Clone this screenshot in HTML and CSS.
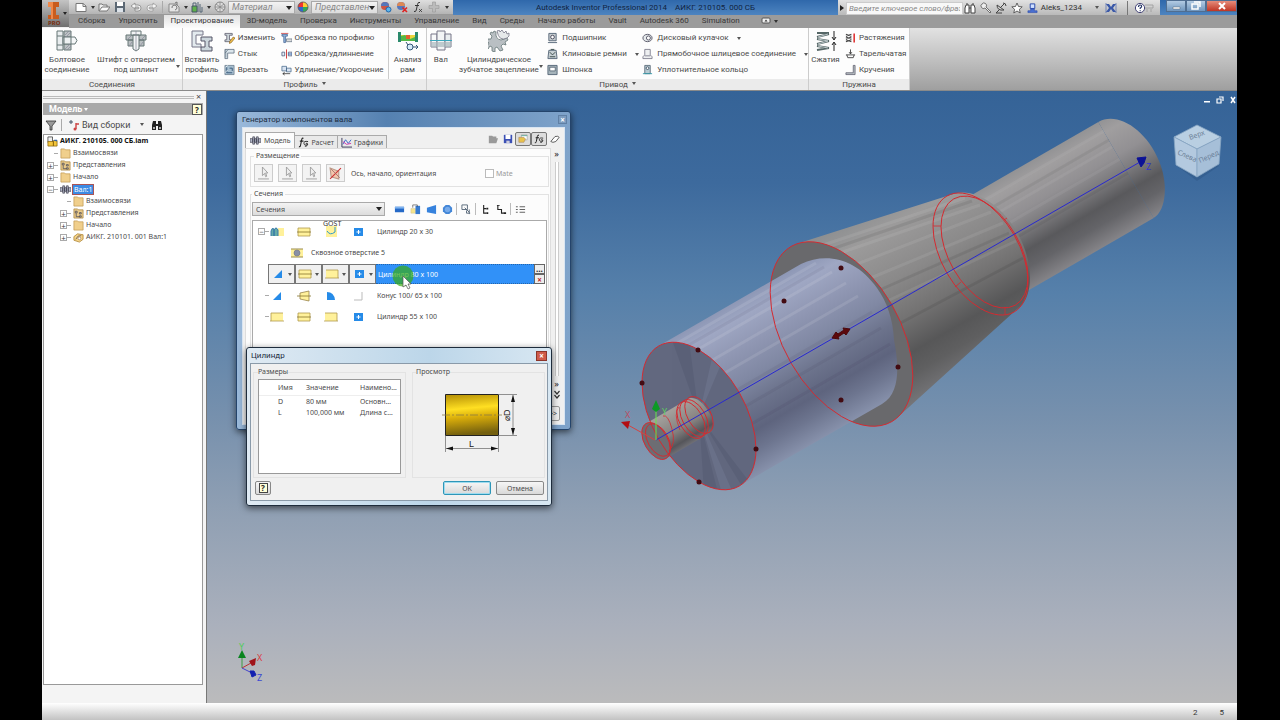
FILE: index.html
```html
<!DOCTYPE html>
<html lang="ru">
<head>
<meta charset="utf-8">
<title>Autodesk Inventor Professional 2014</title>
<link rel="stylesheet" href="styles.css">
</head>
<body>
<svg class="sprite" aria-hidden="true">
  <symbol id="new" viewBox="0 0 12 12"><path d="M1 2.500h7l3 2.500v5.500h-10z" fill="#fff" stroke="#777"/><path d="M8 2.500v3h3" fill="none" stroke="#777"/></symbol>
  <symbol id="open" viewBox="0 0 12 12"><path d="M1 10V3h3l1 1h4v2" fill="#eee" stroke="#777"/><path d="M1 10l3-4h8l-3 4z" fill="#fafafa" stroke="#777"/></symbol>
  <symbol id="save" viewBox="0 0 12 12"><path d="M1 1h10v10H1z" fill="#5c6874"/><path d="M3 1h6v4H3z" fill="#fff"/><path d="M3 7h6v4H3z" fill="#dce3ea"/></symbol>
  <symbol id="undo" viewBox="0 0 12 12"><path d="M1 5l4-3v2h3q3 0 3 3t-3 3H5V8h3q1 0 1-1T8 6H5v2z" fill="#f4f4f4" stroke="#888" stroke-width=".8"/></symbol>
  <symbol id="redo" viewBox="0 0 12 12"><path d="M11 5L7 2v2H4Q1 4 1 7t3 3h3V8H4Q3 8 3 7t1-1h3v2z" fill="#f4f4f4" stroke="#999" stroke-width=".8"/></symbol>
  <symbol id="sheet" viewBox="0 0 12 12"><path d="M1 3h7l3 3v5H1z" fill="#e5e5e5" stroke="#888"/><path d="M4 7a2.500 2.500 0 1 1 3 2M7 2l2-1v3" fill="none" stroke="#777"/></symbol>
  <symbol id="lock" viewBox="0 0 12 12"><path d="M1 5h5v6H1z" fill="#5eb04b" stroke="#456"/><path d="M2 5V2h3v3M7 1v10M9 3v8h2V6" fill="none" stroke="#567"/></symbol>
  <symbol id="sphere" viewBox="0 0 12 12"><circle cx="6" cy="6" r="5" fill="#ddd" stroke="#888"/><path d="M2 3l8 6M2 9l8-6M6 1v10M1 6h10" stroke="#888" stroke-width=".8"/></symbol>
  <symbol id="wheel" viewBox="0 0 12 12"><path d="M6 6L1 6A5 5 0 0 1 6 1z" fill="#e33"/><path d="M6 6V1a5 5 0 0 1 5 5z" fill="#fc3"/><path d="M6 6h5a5 5 0 0 1-5 5z" fill="#3a5"/><path d="M6 6v5A5 5 0 0 1 1 6z" fill="#36c"/><circle cx="6" cy="6" r="5" fill="none" stroke="#555" stroke-width=".8"/></symbol>
  <symbol id="ballb" viewBox="0 0 12 12"><circle cx="5" cy="5" r="4" fill="#c54"/><path d="M1 5a4 4 0 0 1 8 0z" fill="#57b"/><circle cx="8.500" cy="8.500" r="2.500" fill="#5ab6ee" stroke="#26a"/></symbol>
  <symbol id="ballr" viewBox="0 0 12 12"><circle cx="5" cy="5" r="4" fill="#57b"/><path d="M1 5a4 4 0 0 1 8 0z" fill="#d85"/><path d="M6.500 6.500l4.500 4.500M11 6.500L6.500 11" stroke="#d22" stroke-width="1.600"/></symbol>
  <symbol id="fx" viewBox="0 0 12 12"><path d="M8 1.500Q6 .5 5.500 3.500L4.300 9Q4 11 2 10.500M3 4.500h4" fill="none" stroke="#333"/><path d="M7 8l3 3M10 8l-3 3" stroke="#333" stroke-width=".8"/></symbol>
  <symbol id="plus" viewBox="0 0 12 12"><path d="M4.500 1h3v3.500H11v3H7.500V11h-3V7.500H1v-3h3.500z" fill="#bbb" stroke="#999" stroke-width=".6"/></symbol>
  <symbol id="bino" viewBox="0 0 12 12"><path d="M2 3h3v8H1V6zM7 3h3l1 3v5H7z" fill="#fff" stroke="#444"/><path d="M3 1v2M9 1v2M5 6h2" stroke="#444"/></symbol>
  <symbol id="binod" viewBox="0 0 12 12"><path d="M2 2h3v9H1V6zM7 2h3l1 4v5H7z" fill="#222"/><path d="M5 5h2v2H5z" fill="#222"/><path d="M2 8h2v2H2zM8 8h2v2H8z" fill="#aaa"/></symbol>
  <symbol id="wrench" viewBox="0 0 12 12"><path d="M2 2a2.500 2.500 0 0 1 4 3l5 5-1 1-5-5a2.500 2.500 0 0 1-3-4z" fill="#eee" stroke="#555" stroke-width=".8"/></symbol>
  <symbol id="dish" viewBox="0 0 12 12"><path d="M2 3q0 6 7 5zM4 8l-3 3h6M6 5l3-3M8 1q3 0 3 3" fill="none" stroke="#444"/></symbol>
  <symbol id="star" viewBox="0 0 12 12"><path d="M6 1l1.500 3.500 3.700.3-2.800 2.500.8 3.700L6 9l-3.200 2 .8-3.700L.8 4.800l3.700-.3z" fill="#fff" stroke="#444" stroke-width=".8"/></symbol>
  <symbol id="user" viewBox="0 0 12 12"><path d="M3.500 1.500h5v5h-5z" fill="#cfe0ff" stroke="#24a"/><path d="M1 11V9h3V7h4v2h3v2z" fill="#4a6fd0" stroke="#24a" stroke-width=".6"/></symbol>
  <symbol id="exch" viewBox="0 0 12 12"><path d="M1 2h3l2 3 2-3h3L8 6l3 4H8L6 7l-2 3H1l3-4z" fill="#3a58a8"/><path d="M1 1v10M11 1v10" stroke="#3a58a8" stroke-width=".6"/></symbol>
  <symbol id="help" viewBox="0 0 20 12"><circle cx="6" cy="6" r="4.600" fill="#fff" stroke="#447"/><path d="M4.500 5q0-2 1.600-2t1.500 1.500Q7.500 5.500 6.200 6v1M6.200 8.300v1" fill="none" stroke="#236" stroke-width="1.200"/><path d="M11 3h8v3h-8M13 7v3M17 7v3" fill="none" stroke="#999" stroke-width=".8"/></symbol>
  <symbol id="bolt" viewBox="0 0 22 22"><path d="M1 1h6v19H1zM1 6h6M1 15h6" fill="#e9edef" stroke="#677"/><path d="M7 7h12l2 3.500-2 3.500H7z" fill="#f5f7f8" stroke="#677"/><path d="M8 1h7v6H8zM8 14h7v6H8z" fill="#bcc2c4" stroke="#677"/><path d="M8 7h7v7H8z" fill="#edf1f2" stroke="#677"/><path d="M9 5l4-4M10 7l5-5M9 19l5-5M11 20l4-4" stroke="#889" stroke-width=".7"/></symbol>
  <symbol id="pin" viewBox="0 0 22 22"><path d="M1 5h20v5H1zM3 10h16v6H3z" fill="#b9bfc1" stroke="#677"/><path d="M6 1h10v4H6zM8 5h6v14l-3 2-3-2z" fill="#f2f4f5" stroke="#677"/><path d="M11 1v20M2 10l4-4M16 10l4-4M4 16l3-4M15 16l3-4" stroke="#889" stroke-width=".7"/></symbol>
  <symbol id="insprof" viewBox="0 0 22 22"><path d="M1 1h11v4H5v9h5v3H1z" fill="#e3eaee" stroke="#778"/><path d="M10 7h11v4h-3v6h3v4H10v-4h4v-6h-4z" fill="#ccd6dc" stroke="#556"/></symbol>
  <symbol id="frame" viewBox="0 0 22 22"><path d="M1 2h3v10H1zM18 2h3v10h-3z" fill="#2b8a6c"/><path d="M4 5h14v5H4z" fill="#edd43b"/><path d="M4 6l4-1 5 4 5-2v4H4z" fill="#53b848"/><path d="M9 5h4v4H9z" fill="#e2602f"/><circle cx="13" cy="17" r="3" fill="#d7ecfa" stroke="#357"/><path d="M9 12l2 3M16 17h5M19 15l2 2-2 2" fill="none" stroke="#357"/></symbol>
  <symbol id="shaft" viewBox="0 0 22 22"><path d="M1 4h6v13H1z" fill="#f8f9fa" stroke="#778"/><path d="M7 1h8v19H7z" fill="#f2f4f5" stroke="#778"/><path d="M15 4h6v13h-6z" fill="#e9edef" stroke="#778"/><path d="M1 12h20v5H1z" fill="#aab9be" opacity=".7"/><path d="M0 10.500h22" stroke="#3ba8bd"/></symbol>
  <symbol id="gear" viewBox="0 0 22 22"><path d="M6 1l2 1q-1 7 5 8l6-2 1 2-3 2 1 3-3-1-2 2 2 4-3 1-3-4-2 1v4l-3-1v-4l-2-1-2 3-1-3 2-3-2-2 1-2h3l1-3-2-2 1-2 2 1z" fill="#b9bfc3" stroke="#677" stroke-width=".8"/><path d="M9 1l2-1 1 2 2-2 2 3 2-2 1 3 2-1v3l-2 2q-8 4-10-7" fill="#e6e9ea" stroke="#778" stroke-width=".8"/></symbol>
  <symbol id="spring" viewBox="0 0 22 22"><path d="M2 3h12M2 7l12-3M2 9l12 2M2 14l12-3M2 16l12 2M2 20l12-2" stroke="#566" stroke-width="2.200"/><path d="M3 7l10-3M3 9l10 2M3 14l10-3M3 16l10 2" stroke="#c5d0d2" stroke-width=".9"/><path d="M19 1v8M17 7l2 3 2-3M19 21v-8M17 15l2-3 2 3" fill="none" stroke="#222"/></symbol>
  <symbol id="edit" viewBox="0 0 12 12"><path d="M1 1h8v2H6v5h2v2H1V8h2V3H1z" fill="#cbd3d8" stroke="#556" stroke-width=".8"/><path d="M6 10l4-5 2 1-4 5-2 1z" fill="#eebd4b" stroke="#85601a" stroke-width=".7"/></symbol>
  <symbol id="joint" viewBox="0 0 12 12"><path d="M1 1h10v4H4v6H1z" fill="#dce6ec" stroke="#567" stroke-width=".8"/><path d="M1 5l4-4M2 1v9" stroke="#567" stroke-width=".6"/></symbol>
  <symbol id="cut" viewBox="0 0 12 12"><path d="M1 1h10v10H1z" fill="#a7bfd0" stroke="#678" stroke-width=".8"/><path d="M3 3v6h6M6 4h3v3" fill="none" stroke="#357"/><path d="M2 3l2-2M1 9l3-3" stroke="#fff" stroke-width=".8"/></symbol>
  <symbol id="trim" viewBox="0 0 12 12"><path d="M1 2h6v2H5v7H3V4H1z" fill="#91b4dc" stroke="#358" stroke-width=".7"/><path d="M6 7h6v3H6z" fill="#ddd" stroke="#567" stroke-width=".7"/><path d="M0 1h8" stroke="#c33" stroke-width=".8"/></symbol>
  <symbol id="ext" viewBox="0 0 12 12"><path d="M1 4h3v4H1zM8 4h4v4H8z" fill="#e5edf7" stroke="#457" stroke-width=".8"/><path d="M6 1v10" stroke="#c33"/><path d="M8 6h4" stroke="#36a"/></symbol>
  <symbol id="len" viewBox="0 0 12 12"><path d="M1 2h5v5H1zM6 4h5v4H6z" fill="#d8e3f1" stroke="#468" stroke-width=".8"/><path d="M2 10h8M4 8.500L2 10l2 1.500" fill="none" stroke="#222" stroke-width=".8"/></symbol>
  <symbol id="bearing" viewBox="0 0 12 12"><path d="M2 1h8v8H2zM1 11h10" fill="#c7cdd0" stroke="#567"/><circle cx="6" cy="5" r="2" fill="#fff" stroke="#445"/></symbol>
  <symbol id="belt" viewBox="0 0 12 12"><path d="M2 2h8l1 9H1z" fill="#c7d0d4" stroke="#567"/><path d="M3 4l3 3 3-3M3 9h6M4 1h4" fill="none" stroke="#344"/></symbol>
  <symbol id="key" viewBox="0 0 12 12"><path d="M1 1h10v10H1z" fill="#a6b4bb" stroke="#567"/><path d="M3 3h6v4H3z" fill="#fff" stroke="#456" stroke-width=".8"/></symbol>
  <symbol id="cam" viewBox="0 0 12 12"><ellipse cx="6" cy="6" rx="5" ry="4" fill="#e5e9eb" stroke="#556"/><circle cx="7" cy="6" r="2.200" fill="#fff" stroke="#556"/></symbol>
  <symbol id="spline" viewBox="0 0 12 12"><path d="M3 1h6v6l2 2v2H1V9l2-2z" fill="#eef0f1" stroke="#667" stroke-width=".8"/><path d="M3 8h6" stroke="#667" stroke-width=".8"/></symbol>
  <symbol id="ring" viewBox="0 0 12 12"><path d="M3 1h6v9H3z" fill="#b7cbd3" stroke="#456" stroke-width=".8"/><circle cx="6" cy="4" r="1.500" fill="#fff" stroke="#456"/><path d="M1 10h10" stroke="#39a"/></symbol>
  <symbol id="sp1" viewBox="0 0 12 12"><path d="M1 2l6 2M1 5l6 2M1 8l6 2M1 4l6-2M1 7l6-2M1 10l6-2" stroke="#444" stroke-width="1.200"/><path d="M10 1v10" stroke="#d22" stroke-width="1.600"/></symbol>
  <symbol id="sp2" viewBox="0 0 12 12"><path d="M1 7h10M2 7l1 3h6l1-3M6 1v5M4.500 4L6 6l1.500-2" fill="none" stroke="#444"/></symbol>
  <symbol id="sp3" viewBox="0 0 12 12"><path d="M1 9h8V1h2v10H1z" fill="#bcc4c8" stroke="#556" stroke-width=".8"/></symbol>
  <symbol id="folder" viewBox="0 0 12 12"><path d="M1 1h4l1 1h5v9H1z" fill="#f0cf8c" stroke="#c29a52" stroke-width=".8"/></symbol>
  <symbol id="repr" viewBox="0 0 12 12"><path d="M1 1h4l1 1h5v9H1z" fill="#eacb8b" stroke="#a8843f" stroke-width=".8"/><path d="M2.500 3.500h2v2h-2zM3.500 6v3.500H7M7 5h2v1.500H7zM7 8.500h2v1.500H7z" fill="none" stroke="#445" stroke-width=".8"/></symbol>
  <symbol id="asm" viewBox="0 0 12 12"><path d="M1 1h5v6H1z" fill="#eee" stroke="#333" stroke-width=".8"/><path d="M1 6h6v5H1zM7 5h4v6H7z" fill="#f3c63c" stroke="#8a6408" stroke-width=".8"/><path d="M7 5l1-1h3v2" fill="#36a"/></symbol>
  <symbol id="part" viewBox="0 0 12 12"><path d="M1 5l4-3 6 1v5l-4 3-6-2z" fill="#f5d489" stroke="#a77c28" stroke-width=".8"/><path d="M3 8q2-5 6-4" fill="none" stroke="#765"/><circle cx="7" cy="7" r="1.500" fill="#fff" stroke="#865" stroke-width=".6"/></symbol>
  <symbol id="shafti" viewBox="0 0 12 12"><path d="M0 4h3v4H0zM3 2h2v8H3zM5 4h2v4H5zM7 2h2v8H7zM9 4h3v4H9z" fill="#b6bbcc" stroke="#334" stroke-width=".7"/></symbol>
  <symbol id="funnel" viewBox="0 0 12 12"><path d="M1 2h10L7 7v4H5V7z" fill="#999" stroke="#333" stroke-width=".8"/></symbol>
  <symbol id="viewi" viewBox="0 0 12 12"><path d="M1 3h4M3 1v4" stroke="#456"/><path d="M8 4v6M8 5h3" stroke="#c44" stroke-width="1.400"/><circle cx="7" cy="10" r="1.500" fill="#c44"/></symbol>
  <symbol id="graph" viewBox="0 0 12 12"><path d="M1 1v10h11" fill="none" stroke="#335"/><path d="M2 8l3-5 3 4 3-4" fill="none" stroke="#36c"/><path d="M2 5l4 3 5-1" fill="none" stroke="#c3a"/></symbol>
  <symbol id="fg" viewBox="0 0 12 12"><path d="M6 1.500Q4.500.5 4 3L2.800 9Q2.500 11 1 10.500M2 4.500h4" fill="none" stroke="#222" stroke-width="1.200"/><path d="M11 5Q6 4 6.500 7t4 1q0-2-2-1M10.500 8q-1 3-3 2" fill="none" stroke="#222"/></symbol>
  <symbol id="eraser" viewBox="0 0 12 12"><path d="M1 9l5-6q4-1 5 1l-4 5q-4 2-6 0z" fill="#fff" stroke="#444"/></symbol>
  <symbol id="gfold" viewBox="0 0 12 12"><path d="M1 2h4l1 1h4v2h2l-2 6H1z" fill="#999"/></symbol>
  <symbol id="disk" viewBox="0 0 12 12"><path d="M1 1h10v10H1z" fill="#3b50b5"/><path d="M3 1h6v5H3z" fill="#fff"/><path d="M4 8h4v3H4z" fill="#ccd"/></symbol>
  <symbol id="hand" viewBox="0 0 12 12"><path d="M4 1h7v6H4z" fill="#fff" stroke="#999" stroke-width=".7"/><path d="M1 4h6l2 2-2 4H1z" fill="#e9c34c" stroke="#a86" stroke-width=".7"/><path d="M4 2h7" stroke="#6a9" stroke-width="1.200"/></symbol>
  <symbol id="pick" viewBox="0 0 12 12"><path d="M5 0v8l2-2 1 3 1-.5L8 5.500h2z" fill="#eee" stroke="#999" stroke-width=".8"/><path d="M1 11h10" stroke="#aaa"/></symbol>
  <symbol id="flip" viewBox="0 0 12 12"><path d="M1 1l8 3v7L2 9z" fill="#f3c7ad" stroke="#b98"/><path d="M1 11L11 1" stroke="#c33"/><path d="M2 2l8 8" stroke="#966" stroke-width=".7"/></symbol>
  <symbol id="bcyl" viewBox="0 0 12 12"><path d="M1 3h10v6H1z" fill="#2569c7"/><path d="M1 3h10v2H1z" fill="#7eb3f0"/></symbol>
  <symbol id="bins" viewBox="0 0 12 12"><path d="M1 5h5v5H1z" fill="#f5e58d" stroke="#cb8" stroke-width=".5"/><path d="M6 2h5v9H6z" fill="#377bd0"/><path d="M3 4V1h5v2" fill="none" stroke="#444" stroke-width=".7"/></symbol>
  <symbol id="bcone" viewBox="0 0 12 12"><path d="M1 4l10-3v10L1 9z" fill="#3682dd"/></symbol>
  <symbol id="bpoly" viewBox="0 0 12 12"><path d="M4 1h4l3 3v4l-3 3H4L1 8V4z" fill="#4286d7"/><circle cx="6" cy="6" r="3" fill="#76aaea"/></symbol>
  <symbol id="opt" viewBox="0 0 12 12"><path d="M1 1h6v5H1zM4 4l5 5M6 7v3h4M9 6v5" fill="none" stroke="#567"/></symbol>
  <symbol id="tr1" viewBox="0 0 12 12"><path d="M4 1v9h3M4 5h3" fill="none" stroke="#222" stroke-width="1.200"/><path d="M7 4h2v2H7zM7 9h2v2H7z" fill="#222"/></symbol>
  <symbol id="tr2" viewBox="0 0 12 12"><path d="M2 1v5h4v4h2" fill="none" stroke="#222" stroke-width="1.200"/><path d="M8 9h3v2H8zM1 1h3v1H1z" fill="#222"/></symbol>
  <symbol id="list" viewBox="0 0 12 12"><path d="M1 3h2M1 6h2M1 9h2M5 3h6M5 6h6M5 9h6" stroke="#555"/></symbol>
  <symbol id="thread" viewBox="0 0 14 12"><path d="M8 2h6v8H8z" fill="#fff19b"/><path d="M1 10V5q1-4 3-2v7M4 10V4q2-4 4 0v6" fill="#65aaa8" stroke="#3778a8"/></symbol>
  <symbol id="ycyl" viewBox="0 0 14 12"><path d="M1 2h12v8H1z" fill="#fff19b" stroke="#b09b4c" stroke-width=".8"/><path d="M0 6h14" stroke="#85732c" stroke-width=".8"/></symbol>
  <symbol id="ycone" viewBox="0 0 14 12"><path d="M3 3l9-2v10L3 9z" fill="#fff19b" stroke="#98834a" stroke-width=".8"/><path d="M0 6h14" stroke="#85732c" stroke-width=".8"/></symbol>
  <symbol id="yend" viewBox="0 0 14 12"><path d="M1 2h12v8H1z" fill="#fff19b"/><path d="M1 2h12v8M0 10h14" fill="none" stroke="#b09b4c" stroke-width=".8"/></symbol>
  <symbol id="ystart" viewBox="0 0 14 12"><path d="M1 2h12v8H1z" fill="#fff19b"/><path d="M13 2H1v8M0 10h14" fill="none" stroke="#b09b4c" stroke-width=".8"/></symbol>
  <symbol id="cham" viewBox="0 0 14 12"><path d="M3 10L11 2v8z" fill="#268be8"/></symbol>
  <symbol id="round" viewBox="0 0 14 12"><path d="M3 2q7 0 8 8H3z" fill="#268be8"/></symbol>
  <symbol id="corner" viewBox="0 0 14 12"><path d="M11 2v8H3" fill="none" stroke="#bbb"/></symbol>
  <symbol id="bplus" viewBox="0 0 14 12"><path d="M3 2h9v8H3z" fill="#268be8"/><path d="M7.500 4v4M5.500 6h4" stroke="#fff"/></symbol>
  <symbol id="hole" viewBox="0 0 14 12"><path d="M1 2h12v8H1z" fill="#fff19b"/><path d="M1 2h12M1 10h12" stroke="#9a8b4b"/><circle cx="7" cy="6" r="3" fill="#8990a5" stroke="#778" stroke-width=".7"/></symbol>
  <symbol id="gost" viewBox="0 0 14 12"><path d="M2 0h11v11H2z" fill="#fff19b"/><path d="M3 5q3 5 8 1V1" fill="none" stroke="#2d9aca"/></symbol>
</svg>

<div class="app">
  <header class="top">
    <button class="logo" aria-label="Меню приложения"><svg viewBox="0 0 27 27"><path d="M6 2h11v5h-3v8h3v4H6v-4h3V7H6z" fill="#c85c1e"/><path d="M6 2h5v17H9V7H6z" fill="#f0894a"/><path d="M21 12h4l-2 3z" fill="#222"/><text x="6" y="25" class="pro">PRO</text></svg></button>
    <div class="bars">
      <div class="titlebar">
        <div class="qat">
          <button class="tb" aria-label="Создать"><svg><use href="#new"/></svg></button><button class="dd" aria-label="Варианты создания"></button>
          <button class="tb" aria-label="Открыть"><svg><use href="#open"/></svg></button>
          <button class="tb" aria-label="Сохранить"><svg><use href="#save"/></svg></button>
          <button class="tb" aria-label="Отменить"><svg><use href="#undo"/></svg></button>
          <button class="tb" aria-label="Повторить"><svg><use href="#redo"/></svg></button>
          <span class="vsep"></span>
          <button class="tb" aria-label="Лист"><svg><use href="#sheet"/></svg></button><button class="dd" aria-label="Варианты листа"></button>
          <button class="tb" aria-label="Выбор"><svg><use href="#lock"/></svg></button><button class="dd" aria-label="Варианты выбора"></button>
          <button class="tb" aria-label="Материалы"><svg><use href="#sphere"/></svg></button>
          <span class="combo qcombo"><select aria-label="Материал"><option>Материал</option></select></span>
          <button class="tb" aria-label="Цвета"><svg><use href="#wheel"/></svg></button>
          <span class="combo qcombo"><select aria-label="Представление"><option>Представлен</option></select></span>
          <button class="tb" aria-label="Настроить"><svg><use href="#ballb"/></svg></button>
          <button class="tb" aria-label="Очистить"><svg><use href="#ballr"/></svg></button>
          <button class="tb" aria-label="Параметры"><svg><use href="#fx"/></svg></button>
          <button class="tb" aria-label="Добавить"><svg><use href="#plus"/></svg></button>
          <button class="dd last" aria-label="Настройка панели"></button>
        </div>
        <div class="title"><span>Autodesk Inventor Professional 2014</span><span>АИКГ. 210105. 000 СБ</span></div>
        <div class="info">
          <span class="right-tri"></span>
          <input type="text" aria-label="Поиск" placeholder="Введите ключевое слово/фразу">
          <button class="tb" aria-label="Найти"><svg><use href="#bino"/></svg></button>
          <button class="tb" aria-label="Подписка"><svg><use href="#wrench"/></svg></button>
          <button class="tb" aria-label="Связь"><svg><use href="#dish"/></svg></button>
          <button class="tb" aria-label="Избранное"><svg><use href="#star"/></svg></button>
          <button class="login"><svg><use href="#user"/></svg>Aleks_1234<i class="tri"></i></button>
          <button class="tb" aria-label="Exchange"><svg><use href="#exch"/></svg></button>
          <button class="tb helpb" aria-label="Справка"><svg><use href="#help"/></svg></button>
        </div>
        <div class="winbtns">
          <button aria-label="Свернуть"><svg viewBox="0 0 12 10"><path d="M3 6h7v2H3z" fill="#fff" stroke="#567" stroke-width=".5"/></svg></button>
          <button aria-label="Развернуть"><svg viewBox="0 0 12 10"><path d="M4 1h6v5M2 3h6v5H2z" fill="none" stroke="#fff" stroke-width="1.500"/></svg></button>
          <button class="close" aria-label="Закрыть"><svg viewBox="0 0 12 10"><path d="M3 2l6 6M9 2L3 8" stroke="#fff" stroke-width="2"/></svg></button>
        </div>
      </div>
      <nav class="tabs">
        <button>Сборка</button><button>Упростить</button><button class="on">Проектирование</button><button>3D-модель</button><button>Проверка</button><button>Инструменты</button><button>Управление</button><button>Вид</button><button>Среды</button><button>Начало работы</button><button>Vault</button><button>Autodesk 360</button><button>Simulation</button>
        <button class="mini" aria-label="Свернуть ленту"><svg viewBox="0 0 18 8"><rect x="1" y="1" width="8" height="5" rx="1" fill="#eee" stroke="#555"/><path d="M3.500 4.500L5 2.500l1.500 2zM13 3h4l-2 3z" fill="#333"/></svg></button>
      </nav>
    </div>
  </header>

  <div class="ribbon">
    <section class="panel p1">
      <div class="pbody">
        <button class="big w50"><svg><use href="#bolt"/></svg><span>Болтовое<br>соединение</span></button>
        <button class="big w88"><svg><use href="#pin"/></svg><span>Штифт с отверстием<br>под шплинт</span><i class="tri"></i></button>
      </div>
      <h2>Соединения</h2>
    </section>
    <section class="panel p2">
      <div class="pbody">
        <button class="big w38"><svg><use href="#insprof"/></svg><span>Вставить<br>профиль</span></button>
        <div class="col c56">
          <button><svg><use href="#edit"/></svg>Изменить</button>
          <button><svg><use href="#joint"/></svg>Стык</button>
          <button><svg><use href="#cut"/></svg>Врезать</button>
        </div>
        <div class="col c112">
          <button><svg><use href="#trim"/></svg>Обрезка по профилю</button>
          <button><svg><use href="#ext"/></svg>Обрезка/удлиннение</button>
          <button><svg><use href="#len"/></svg>Удлинение/Укорочение</button>
        </div>
        <button class="big w38 sepl"><svg><use href="#frame"/></svg><span>Анализ<br>рам</span></button>
      </div>
      <h2>Профиль <i class="tri"></i></h2>
    </section>
    <section class="panel p3">
      <div class="pbody">
        <button class="big w28"><svg><use href="#shaft"/></svg><span>Вал</span></button>
        <button class="big w90"><svg><use href="#gear"/></svg><span>Цилиндрическое<br>зубчатое зацепление</span><i class="tri"></i></button>
        <div class="col c95">
          <button><svg><use href="#bearing"/></svg>Подшипник</button>
          <button><svg><use href="#belt"/></svg>Клиновые ремни<i class="tri"></i></button>
          <button><svg><use href="#key"/></svg>Шпонка</button>
        </div>
        <div class="col cflex">
          <button><svg><use href="#cam"/></svg>Дисковый кулачок<i class="tri"></i></button>
          <button><svg><use href="#spline"/></svg>Прямобочное шлицевое соединение<i class="tri"></i></button>
          <button><svg><use href="#ring"/></svg>Уплотнительное кольцо</button>
        </div>
      </div>
      <h2>Привод <i class="tri"></i></h2>
    </section>
    <section class="panel p4">
      <div class="pbody">
        <button class="big w33"><svg><use href="#spring"/></svg><span>Сжатия</span></button>
        <div class="col cflex">
          <button><svg><use href="#sp1"/></svg>Растяжения</button>
          <button><svg><use href="#sp2"/></svg>Тарельчатая</button>
          <button><svg><use href="#sp3"/></svg>Кручения</button>
        </div>
      </div>
      <h2>Пружина</h2>
    </section>
  </div>

  <main class="work">
    <aside class="browser">
      <div class="grip"><span></span><button aria-label="Закрыть панель">×</button></div>
      <div class="bhead"><b>Модель</b><i class="tri"></i><button class="q" aria-label="Справка">?</button></div>
      <div class="btools">
        <button class="tb" aria-label="Фильтр"><svg><use href="#funnel"/></svg></button><span class="vsep"></span>
        <button class="view"><svg><use href="#viewi"/></svg>Вид сборки<i class="tri"></i></button>
        <button class="tb" aria-label="Найти"><svg><use href="#binod"/></svg></button>
      </div>
      <ul class="tree">
        <li class="root"><svg><use href="#asm"/></svg><b>АИКГ. 210105. 000 СБ.iam</b></li>
        <li class="l1"><span class="ex none"></span><svg><use href="#folder"/></svg>Взаимосвязи</li>
        <li class="l1"><span class="ex">+</span><svg><use href="#repr"/></svg>Представления</li>
        <li class="l1"><span class="ex">+</span><svg><use href="#folder"/></svg>Начало</li>
        <li class="l1"><span class="ex">−</span><svg><use href="#shafti"/></svg><span class="sel">Вал:1</span></li>
        <li class="l2"><span class="ex none"></span><svg><use href="#folder"/></svg>Взаимосвязи</li>
        <li class="l2"><span class="ex">+</span><svg><use href="#repr"/></svg>Представления</li>
        <li class="l2"><span class="ex">+</span><svg><use href="#folder"/></svg>Начало</li>
        <li class="l2"><span class="ex">+</span><svg><use href="#part"/></svg>АИКГ. 210101. 001 Вал:1</li>
      </ul>
    </aside>

    <div class="canvas">
      <svg class="scene" viewBox="207 91 1030 612" preserveAspectRatio="xMidYMid meet">
        <defs>
          <linearGradient id="gb" gradientUnits="userSpaceOnUse" x1="658.700" y1="346" x2="739" y2="486">
            <stop offset="0" stop-color="#8e98b6"/><stop offset=".1" stop-color="#9fa7c3"/><stop offset=".28" stop-color="#8f96b2"/><stop offset=".45" stop-color="#8088a3"/><stop offset=".6" stop-color="#6c738c"/><stop offset=".75" stop-color="#5e647e"/><stop offset=".86" stop-color="#6d758f"/><stop offset="1" stop-color="#8791ab"/>
          </linearGradient>
          <linearGradient id="gg" gradientUnits="userSpaceOnUse" x1="956" y1="204" x2="1012" y2="300">
            <stop offset="0" stop-color="#929294"/><stop offset=".12" stop-color="#a09e9f"/><stop offset=".35" stop-color="#929093"/><stop offset=".5" stop-color="#7c7b7e"/><stop offset=".68" stop-color="#59595c"/><stop offset=".82" stop-color="#646468"/><stop offset="1" stop-color="#858488"/>
          </linearGradient>
          <linearGradient id="gc" gradientUnits="userSpaceOnUse" x1="870" y1="205" x2="966" y2="372">
            <stop offset="0" stop-color="#8c8e90"/><stop offset=".15" stop-color="#9c9b9b"/><stop offset=".4" stop-color="#8a8989"/><stop offset=".6" stop-color="#737272"/><stop offset=".77" stop-color="#575758"/><stop offset=".87" stop-color="#5f5f60"/><stop offset="1" stop-color="#747477"/>
          </linearGradient>
          <linearGradient id="gs" gradientUnits="userSpaceOnUse" x1="667" y1="413" x2="688" y2="448">
            <stop offset="0" stop-color="#a3a09c"/><stop offset=".5" stop-color="#85817f"/><stop offset=".8" stop-color="#55555a"/><stop offset="1" stop-color="#77777d"/>
          </linearGradient>
          <clipPath id="face"><circle r="1" transform="matrix(57 33 0 66 699 416)"/></clipPath>
        </defs>
        <g fill="url(#gg)">
          <path d="M956.300 203.900L1098.300 121.900 1153.700 218.100 1011.700 300.100z"/>
          <path d="M1098.300 121.900C1117 111 1146 129 1159 161C1168 182 1167 210 1153.700 218.100z"/>
        </g>
        <g stroke="#fff" stroke-opacity=".06" stroke-width="3"><path d="M962 213l142-82M970 229l142-82M978 241l142-82"/><path d="M967 222l142-82M986 255l142-82" stroke="#000"/></g>
        <path d="M797.800 243.600L955.600 193.200C978 188 1007 209 1021 240C1034 268 1032 296 1020.500 306.100L897.700 417.200z" fill="url(#gc)"/>
        <g stroke="#fff" stroke-opacity=".08" stroke-width="3"><path d="M820 246l145-48M837 254l143-49M852 266l139-54M866 280l137-57M883 303l133-62"/><path d="M829 250l143-49M875 292l134-59M893 327l130-69" stroke="#000"/></g>
        <circle r="1" transform="matrix(71.300 41.300 0 82.500 841.500 334)" fill="#69696c"/>
        <path d="M658.700 346L801 264C826 252 856 258 877 288C887 302 893 319 894 340C898 360 902 393 882 404L739 486z" fill="url(#gb)"/>
        <g stroke="#fff" stroke-opacity=".1" stroke-width="3"><path d="M674 345l142-82M690 354l142-82M704 365l142-82M716 378l142-82"/><path d="M682 349l142-82M730 394l142-82M739 410l142-82M748 426l142-82" stroke="#213" stroke-opacity=".06"/></g>
        <circle r="1" transform="matrix(57 33 0 66 699 416)" fill="#62687f"/>
        <g clip-path="url(#face)" opacity=".35">
          <path d="M699 416L672 340H689zM699 416L704 493H718zM699 416L746 493H758z" fill="#4f556c"/>
          <path d="M699 416L715 345 727 350zM699 416L722 493H733z" fill="#7a819c"/>
        </g>
        <path d="M645.900 423.500L689 398.500C700 395 712 414 713 424C714 430 712 431 709 433.500L666 458.500z" fill="url(#gs)"/>
        <circle r="1" transform="matrix(14.200 8.200 0 16.500 656 441)" fill="#6d6d73"/>
        <g fill="none" stroke="#d42a30" class="ell">
          <circle r="1" transform="matrix(57 33 0 66 699 416)"/>
          <circle r="1" transform="matrix(71.300 41.300 0 82.500 841.500 334)"/>
          <circle r="1" transform="matrix(47.500 27.500 0 54.500 980.500 254)"/>
          <circle r="1" transform="matrix(43.500 25.200 0 50 984.500 252)"/>
          <circle r="1" transform="matrix(14.200 8.200 0 16.500 656 441)"/>
          <circle r="1" transform="matrix(12.500 7.200 0 14.500 658 440)"/>
          <circle r="1" transform="matrix(14.200 8.200 0 16.500 691 420)"/>
          <circle r="1" transform="matrix(14.200 8.200 0 16.500 694 418)"/>
          <circle r="1" transform="matrix(14.200 8.200 0 16.500 699 415)"/>
        </g>
        <path d="M933 226h8M955 287l6-5M1005 307v7M1004 220l3-2M663 416q5-2 9 13t-3 22M679 407q-6 6 1 23" fill="none" stroke="#d42a30" stroke-width=".8"/>
        <path d="M656 440L1140 162" stroke="#2929d0"/>
        <path d="M1146 157l-9 1 4 9 3-4z" fill="#0c1296" stroke="#0c1296"/>
        <text x="1146" y="170" class="ax" fill="#3434d0">Z</text>
        <g fill="#430b12"><circle cx="698" cy="350" r="2.500"/><circle cx="642" cy="383" r="2.500"/><circle cx="756" cy="449" r="2.500"/><circle cx="699" cy="482" r="2.500"/><circle cx="784" cy="301" r="2.500"/><circle cx="841" cy="268" r="2.500"/><circle cx="898" cy="367" r="2.500"/><circle cx="841" cy="400" r="2.500"/></g>
        <path d="M832 338l4-6 2 2 6-4-1-2 7 1-4 6-2-2-6 4 1 2z" fill="#5c080c" stroke="#4b080b"/>
        <path d="M656 440v-31" stroke="#69e34f"/><path d="M652 409l4-9 4 9-4 3z" fill="#0c9a25"/><text x="662" y="415" class="ax" fill="#5ecb62">Y</text>
        <path d="M655 440l-27-15" stroke="#d64240"/><path d="M621 422l9-1-2 8z" fill="#b30d12"/><text x="625" y="418" class="ax" fill="#b84d63">X</text>

        <path d="M1177 166l20 15 22-15-5-4h-30z" fill="#244a76" opacity=".3"/>
        <g stroke="#86a5c2" stroke-width=".8"><path d="M1197 125l24 12-24 12-23-12z" fill="#b9cfe2"/><path d="M1174 137l23 12v28l-21-12z" fill="#b3c9df"/><path d="M1221 137l-24 12v28l22-13z" fill="#a6bfd8"/></g>
        <g class="cube"><text transform="translate(1190 140) rotate(-20)">Верх</text><text transform="translate(1177 154) rotate(24)">Слева</text><text transform="translate(1200 163) rotate(-24)">Перед</text></g>

        <path d="M242 668v-12" stroke="#3c9b43"/><path d="M242 668l9-5" stroke="#b33"/><path d="M242 668l10 5" stroke="#44c"/>
        <path d="M238 658l4-8 4 8z" fill="#0a8420"/><path d="M249 661l7-3-1 7-3 1z" fill="#a0141a"/><path d="M250 671l2 6 4-2-2-4z" fill="#1420b0" stroke="#1420b0"/>
        <text x="239" y="650" class="ax" fill="#52cc5a">Y</text><text x="257" y="661" class="ax" fill="#dc3b40">X</text><text x="257" y="681" class="ax" fill="#3b48d2">Z</text>
      </svg>
      <div class="docbtns">
        <button aria-label="Свернуть документ"><svg viewBox="0 0 8 8"><path d="M1 5h6v1.500H1z" fill="#fff"/></svg></button>
        <button aria-label="Восстановить документ"><svg viewBox="0 0 8 8"><path d="M3 1h4v4M1 3h4v4H1z" fill="none" stroke="#fff" stroke-width="1.200"/></svg></button>
        <button aria-label="Закрыть документ"><svg viewBox="0 0 8 8"><path d="M2 1l4 6M6 1L2 7" stroke="#fff" stroke-width="1.500"/></svg></button>
      </div>

      <section class="win gen" aria-label="Генератор компонентов вала">
        <div class="wtitle"><span>Генератор компонентов вала</span><button class="wx" aria-label="Закрыть">×</button></div>
        <div class="client">
          <div class="ghead">
            <button class="gt on"><svg><use href="#shafti"/></svg>Модель</button>
            <button class="gt"><svg><use href="#fg"/></svg>Расчет</button>
            <button class="gt"><svg><use href="#graph"/></svg>Графики</button>
            <span class="grow"></span>
            <button class="gb" aria-label="Открыть"><svg><use href="#gfold"/></svg></button>
            <button class="gb" aria-label="Сохранить"><svg><use href="#disk"/></svg></button>
            <button class="gb down" aria-label="Именование"><svg><use href="#hand"/></svg></button>
            <button class="gb down" aria-label="Расчет вкл."><svg><use href="#fg"/></svg></button>
            <button class="gb" aria-label="Сброс"><svg><use href="#eraser"/></svg></button>
          </div>
          <div class="gbody">
            <div class="page">
              <fieldset class="place"><legend>Размещение</legend>
                <div class="prow">
                  <button aria-label="Ось"><svg><use href="#pick"/></svg></button>
                  <button aria-label="Начало"><svg><use href="#pick"/></svg></button>
                  <button aria-label="Ориентация"><svg><use href="#pick"/></svg></button>
                  <button aria-label="Обратить"><svg><use href="#flip"/></svg></button>
                  <span class="orient">Ось, начало, ориентация</span>
                  <label class="mate"><input type="checkbox" disabled>Mate</label>
                </div>
              </fieldset>
              <fieldset class="sections"><legend>Сечения</legend>
                <div class="srow">
                  <span class="combo scombo"><select aria-label="Сечения"><option>Сечения</option></select></span>
                  <button aria-label="Цилиндр"><svg><use href="#bcyl"/></svg></button>
                  <button aria-label="Вставить"><svg><use href="#bins"/></svg></button>
                  <button aria-label="Конус"><svg><use href="#bcone"/></svg></button>
                  <button aria-label="Многогранник"><svg><use href="#bpoly"/></svg></button>
                  <i class="ssep"></i>
                  <button aria-label="Параметры"><svg><use href="#opt"/></svg></button>
                  <i class="ssep"></i>
                  <button aria-label="Развернуть"><svg><use href="#tr1"/></svg></button>
                  <button aria-label="Свернуть"><svg><use href="#tr2"/></svg></button>
                  <i class="ssep"></i>
                  <button aria-label="Список"><svg><use href="#list"/></svg></button>
                </div>
                <ul class="slist">
                  <li><span class="ex">−</span><svg><use href="#thread"/></svg><svg><use href="#ycyl"/></svg><span class="gostw"><svg><use href="#gost"/></svg><small>GOST</small></span><svg><use href="#bplus"/></svg><span class="nm">Цилиндр 20 x 30</span></li>
                  <li class="sub"><svg><use href="#hole"/></svg><span class="nm">Сквозное отверстие 5</span></li>
                  <li class="cur">
                    <button aria-label="Левая кромка"><svg><use href="#cham"/></svg><i class="tri"></i></button>
                    <button aria-label="Тип сечения"><svg><use href="#ycyl"/></svg><i class="tri"></i></button>
                    <button aria-label="Правая кромка"><svg><use href="#yend"/></svg><i class="tri"></i></button>
                    <button aria-label="Элементы"><svg><use href="#bplus"/></svg><i class="tri"></i></button>
                    <span class="nm">Цилиндр 80 x 100</span>
                    <span class="pair"><button aria-label="Свойства">…</button><button class="del" aria-label="Удалить">×</button></span>
                    <svg class="pointer" viewBox="0 0 24 26"><circle cx="11" cy="11" r="10.500" fill="#39ab12" opacity=".7"/><path d="M11 11v11l3-2 2 4 2-1-2-4h3z" fill="#fff" stroke="#555" stroke-width=".7"/></svg>
                  </li>
                  <li><span class="ex none"></span><svg><use href="#cham"/></svg><svg><use href="#ycone"/></svg><svg><use href="#round"/></svg><svg><use href="#corner"/></svg><span class="nm">Конус 100/ 65 x 100</span></li>
                  <li><span class="ex none"></span><svg><use href="#ystart"/></svg><svg><use href="#ycyl"/></svg><svg><use href="#yend"/></svg><svg><use href="#bplus"/></svg><span class="nm">Цилиндр 55 x 100</span></li>
                </ul>
              </fieldset>
            </div>
            <div class="strip"><button aria-label="Развернуть вправо">»</button><span></span><button aria-label="Развернуть">»</button><button aria-label="Подробнее"><svg viewBox="0 0 8 10"><path d="M1.500 1l2.500 3 2.500-3M1.500 5l2.500 3 2.500-3" fill="none" stroke="#333" stroke-width="1.200"/></svg></button></div>
          </div>
          <div class="gfoot"><button aria-label="Больше">&gt;&gt;</button></div>
        </div>
      </section>

      <section class="win cyl" aria-label="Цилиндр">
        <div class="wtitle"><span>Цилиндр</span><button class="wx" aria-label="Закрыть">×</button></div>
        <div class="client">
          <div class="cols">
            <fieldset class="dims"><legend>Размеры</legend>
              <div class="tbox"><table>
                <thead><tr><th>Имя</th><th>Значение</th><th>Наимено…</th></tr></thead>
                <tbody><tr><td>D</td><td>80 мм</td><td>Основн…</td></tr><tr><td>L</td><td>100,000 мм</td><td>Длина с…</td></tr></tbody>
              </table></div>
            </fieldset>
            <fieldset class="prev"><legend>Просмотр</legend>
              <svg viewBox="430 385 100 72">
                <defs><linearGradient id="gold" x1="0" y1="0" x2=".12" y2="1"><stop offset="0" stop-color="#b38d05"/><stop offset=".38" stop-color="#ffdf22"/><stop offset=".6" stop-color="#d8ac0a"/><stop offset="1" stop-color="#74600f"/></linearGradient></defs>
                <path d="M445.500 394.500h53v41h-53z" fill="url(#gold)" stroke="#222"/>
                <path d="M442 415h60" stroke="#8b7c44" stroke-width=".8" stroke-dasharray="8 2 2 2"/>
                <path d="M498 394.500h19M498 435.500h19M513 395v40M445.500 436v16M498.500 436v16M446 448.500h52" stroke="#666" stroke-width=".7"/>
                <path d="M513 395l-2 7h4zM513 435l-2-7h4zM446 448.500l7-2v4zM498 448.500l-7-2v4z" fill="#111"/>
                <text x="469" y="447" class="dim">L</text><text transform="translate(510 421) rotate(-90)" class="dim">⌀D</text>
              </svg>
            </fieldset>
          </div>
          <div class="actions"><button class="q" aria-label="Справка"><span>?</span></button><span class="grow"></span><button class="ok">ОК</button><button>Отмена</button></div>
        </div>
      </section>
    </div>
  </main>
  <footer class="status"><span>2</span><span>5</span></footer>
</div>
</body>
</html>
```
FILE: styles.css
```css
* { box-sizing: border-box; }
body { margin: 0; background: #000; color: #4a4a4a; font: 8px/10px Roboto, "Noto Sans", sans-serif; }
button, input, select { font: inherit; color: inherit; margin: 0; }
button { border: 0; padding: 0; background: none; white-space: nowrap; }
svg { display: block; flex: none; }
fieldset { margin: 0; min-width: 0; }
ul { list-style: none; margin: 0; padding: 0; }
.sprite { position: absolute; width: 0; height: 0; }
.grow { flex: 1; }
.tri { display: inline-block; flex: none; border: 2px solid transparent; border-top: 3px solid #555; border-bottom: 0; }
.vsep { width: 1px; height: 12px; margin: 0 3px 0 2px; background: #aaa; }

.app { display: flex; flex-direction: column; min-height: 100vh; margin: 0 43px 0 42px; background: #f0f0f0; }

/* title bar and tabs */
.top { display: flex; height: 28px; }
.logo { width: 27px; height: 27px; background: linear-gradient(#c4c4c4, #6f6f6f); }
.logo svg { width: 27px; height: 27px; }
.pro { font: bold 6px "Open Sans", sans-serif; fill: #7a2c0c; }
.bars { flex: 1; min-width: 0; }
.titlebar { display: flex; height: 15px; background: linear-gradient(#2f68ab, #4d84c0); }
.qat { display: flex; align-items: center; width: 384px; padding-left: 4px; background: linear-gradient(#dedede, #b4b4b4); border-bottom: 1px solid #999; }
.tb { display: flex; align-items: center; justify-content: center; width: 16px; height: 14px; }
.tb svg { width: 12px; height: 12px; }
.dd { display: flex; justify-content: center; width: 7px; }
.dd::after { content: ""; border: 2px solid transparent; border-top: 3px solid #333; border-bottom: 0; }
.dd.last { width: 10px; }
.combo { position: relative; display: block; }
.combo select { appearance: none; display: block; width: 100%; border: 1px solid #aaa; border-radius: 0; padding: 0 3px; background: linear-gradient(#f3f3f3, #dcdcdc); }
.combo::after { content: ""; position: absolute; right: 3px; top: 5px; border: 3px solid transparent; border-top: 4px solid #222; border-bottom: 0; pointer-events: none; }
.qcombo { width: 67px; }
.qcombo select { height: 13px; font-size: 9px; font-style: italic; line-height: 11px; color: #888; }
.title { flex: 1; display: flex; align-items: center; justify-content: center; gap: 8px; color: #10233f; white-space: nowrap; }
.info { display: flex; align-items: center; width: 322px; background: linear-gradient(#e2e2e2, #b9b9b9); }
.right-tri { border: 3px solid transparent; border-left: 4px solid #222; border-right: 0; margin: 0 2px; }
.info input { width: 120px; height: 13px; margin-top: 1px; padding: 0 2px; border: 1px solid #ccc; background: #f8f8f8; font-style: italic; }
.info input::placeholder { color: #888; opacity: 1; }
.login { display: flex; align-items: center; gap: 3px; width: 81px; padding-left: 2px; color: #333; }
.login svg { width: 11px; height: 12px; }
.login .tri { margin-left: auto; margin-right: 4px; }
.helpb { width: 34px; border-left: 1px solid #777; margin-left: 8px; }
.helpb svg { width: 20px; }
.winbtns { display: flex; width: 71px; height: 12px; margin-left: 6px; }
.winbtns button { flex: 1; display: flex; justify-content: center; border: 1px solid #506e91; background: linear-gradient(#b3cbe3, #6e95bd); }
.winbtns .close { flex: 1.600; background: linear-gradient(#e58c7a, #c03524); }
.winbtns svg { width: 12px; height: 10px; }
.tabs { display: flex; height: 13px; padding-left: 2px; background: #9b9b9b; }
.tabs button { padding: 0 6px 1px 7px; line-height: 12px; color: #383838; }
.tabs .on { background: linear-gradient(#e2e2e2, #fbfbfb); }
.tabs .mini { padding-left: 15px; }
.mini svg { width: 18px; height: 8px; }

/* ribbon */
.ribbon { display: flex; height: 63px; background: linear-gradient(#e2e2e2, #9f9f9f); border-bottom: 1px solid #8a8a8a; }
.panel { display: flex; flex-direction: column; background: #fdfdfd; border-right: 1px solid #ccc; }
.p1 { width: 141px; }
.p2 { width: 244px; }
.p3 { width: 382px; }
.p4 { width: 101px; }
.pbody { flex: 1; display: flex; padding-top: 2px; }
.panel h2 { margin: 0; height: 11px; font-size: 8px; line-height: 11px; font-weight: normal; text-align: center; background: #ebebeb; }
.panel h2 .tri { margin: 0 0 2px 2px; }
.big { position: relative; display: flex; flex-direction: column; align-items: center; gap: 3px; height: 49px; }
.big svg { width: 22px; height: 22px; }
.big .tri { position: absolute; right: 0; top: 35px; }
.w28 { width: 28px; }
.w33 { width: 33px; }
.w38 { width: 38px; }
.w50 { width: 50px; }
.w88 { width: 88px; }
.w90 { width: 90px; }
.sepl { border-left: 1px solid #ccc; }
.col button { display: flex; align-items: center; gap: 3px; height: 16px; padding-left: 3px; }
.col svg { width: 11px; height: 12px; }
.col .tri { margin-left: 4px; }
.c56 { width: 57px; }
.c112 { width: 111px; }
.c95 { width: 95px; }
.p3 .col button { padding-left: 4px; gap: 4px; }
.cflex { flex: 1; }

/* model browser */
.work { flex: 1; display: flex; min-height: 0; }
.browser { display: flex; flex-direction: column; width: 165px; padding: 0 3px 18px 1px; background: #f4f4f4; border-right: 1px solid #777; font: 7px/12px "Noto Sans", sans-serif; }
.grip { display: flex; align-items: center; height: 12px; }
.grip span { flex: 1; height: 3px; border: 1px solid #bbb; border-width: 1px 0; }
.grip button { width: 9px; font-size: 9px; line-height: 10px; }
.bhead { display: flex; align-items: center; gap: 2px; height: 12px; padding: 0 1px 0 6px; background: #a9a9a9; color: #fff; font: 9px/12px Roboto, sans-serif; }
.bhead .tri { border-top-color: #fff; }
.q { margin-left: auto; width: 10px; height: 11px; border: 1px solid #555; background: #ffffd8; color: #222; font: bold 8px/9px "Noto Sans", sans-serif; }
.btools { display: flex; align-items: center; height: 19px; font: 9px/12px Roboto, sans-serif; }
.btools .vsep { margin-right: 6px; }
.view { display: flex; align-items: center; gap: 2px; }
.view svg { width: 12px; height: 12px; }
.view .tri { margin: 0 5px 0 8px; }
.tree { flex: 1; border: 1px solid #999; background: #fff; padding-top: 0; }
.tree li { display: flex; align-items: center; height: 12px; white-space: nowrap; }
.tree svg { width: 11px; height: 11px; margin-right: 2px; }
.tree .root { padding-left: 3px; color: #111; }
.tree .l1 { padding-left: 3px; }
.tree .l2 { padding-left: 16px; }
.ex { position: relative; flex: none; width: 7px; height: 7px; margin-right: 6px; border: 1px solid #aaa; font: 6px/5px "DejaVu Sans", sans-serif; text-align: center; color: #333; background: #fff; }
.ex::after { content: ""; position: absolute; left: 6px; top: 2px; width: 4px; height: 1px; background: #aaa; }
.ex.none { border-color: transparent; background: none; }
.sel { padding: 0 1px; line-height: 9px; background: #3d8be4; color: #fff; outline: 1px solid #a55; }

/* model space */
.canvas { position: relative; flex: 1; min-width: 0; background: linear-gradient(#356397 0%, #3d6a9d 15%, #5680aa 33%, #7690ad 53%, #8f9fb3 68%, #aab0bc 87%, #bbbbbc 100%); }
.scene { position: absolute; inset: 0; width: 100%; height: 100%; }
.ell circle { vector-effect: non-scaling-stroke; stroke-width: 1px; }
.ax { font: 9px "Noto Sans", sans-serif; }
.cube { font: 7px "Noto Sans", sans-serif; fill: #6c8198; }
.docbtns { position: absolute; right: 0; top: 5px; display: flex; gap: 5px; }
.docbtns svg { width: 8px; height: 8px; }

/* dialogs */
.win { position: absolute; display: flex; flex-direction: column; border: 1px solid #24446b; border-radius: 3px; font: 7px/9px "Noto Sans", sans-serif; box-shadow: 0 2px 7px #0009; }
.wtitle { display: flex; justify-content: space-between; align-items: center; height: 15px; color: #1c2c40; font: 8px/12px Roboto, sans-serif; }
.wx { width: 9px; height: 9px; border: 1px solid #6080a5; color: #fff; font: bold 8px/7px "Noto Sans", sans-serif; background: #7c9cc0; }
.client { flex: 1; min-height: 0; display: flex; flex-direction: column; background: #f0f0f0; }
.gen { left: 29px; top: 20px; width: 335px; height: 319px; padding: 0 5px 4px; background: linear-gradient(90deg, #9ab9da, #5581b1 45%, #7fa3ca); }
.gen .client { border: 1px solid #d9e5f2; padding: 3px 2px 0; }
.gen .wtitle { margin-right: -2px; }
.ghead { display: flex; align-items: flex-end; height: 17px; }
.gt { display: flex; align-items: center; gap: 2px; height: 13px; padding: 0 3px; border: 1px solid #aaa; border-bottom: 0; background: #e9e9e9; margin-left: -1px; }
.gt.on { height: 16px; padding: 0 4px; gap: 3px; background: #fcfcfc; margin-left: 0; }
.gt svg { width: 11px; height: 11px; }
.gb { width: 15px; height: 14px; margin-bottom: 2px; display: flex; align-items: center; justify-content: center; }
.gb svg { width: 10px; height: 10px; }
.gb.down { border: 1px solid #777; background: #ddd; border-radius: 2px; width: 16px; }
.gbody { flex: 1; display: flex; min-height: 0; }
.page { flex: 1; display: flex; flex-direction: column; gap: 3px; padding: 3px 1px 0 4px; background: #fcfcfc; border: 1px solid #ddd; }
.page fieldset { border: 1px solid #e2e2e2; padding: 0 3px 0; }
legend { padding: 0 2px; line-height: 8px; }
.place { height: 35px; }
.prow { display: flex; align-items: center; padding-top: 4px; }
.prow button { width: 19px; height: 18px; margin-right: 5px; border: 1px solid #ccc; background: #f3f3f3; display: flex; align-items: center; justify-content: center; }
.prow svg { width: 13px; height: 13px; }
.orient { margin-left: 1px; flex: 1; }
.mate { display: flex; align-items: center; gap: 2px; width: 60px; color: #999; }
.mate input { appearance: none; width: 9px; height: 9px; margin: 0; border: 1px solid #bbb; background: #fff; }
.sections { flex: 1; display: flex; flex-direction: column; }
.page .sections { padding: 0 1px; }
.srow { display: flex; align-items: center; padding: 4px 0 4px; }
.scombo { width: 133px; margin-right: 6px; }
.scombo select { height: 14px; }
.srow button { width: 16px; height: 14px; display: flex; align-items: center; justify-content: center; }
.srow svg { width: 11px; height: 11px; }
.ssep { width: 1px; height: 12px; margin: 0 1px; background: #bbb; }
.slist { height: 170px; border: 1px solid #aaa; background: #fff; }
.slist li { position: relative; display: flex; align-items: center; height: 21px; padding-left: 5px; white-space: nowrap; }
.slist svg { width: 14px; height: 12px; margin-right: 13px; }
.slist .ex { margin-right: 5px; }
.slist .nm { margin-left: -1px; }
.slist .sub { padding-left: 37px; }
.slist .sub svg { margin-right: 8px; }
.gostw { position: relative; }
.gostw small { position: absolute; left: -1px; top: -6px; font-size: 7px; line-height: 7px; color: #333; }
.slist .cur { height: 22px; padding: 0 1px 0 15px; color: #fff; }
.cur > button { display: flex; align-items: center; justify-content: space-around; width: 27px; height: 20px; border: 1px solid #777; background: #f0f0f0; }
.cur > button svg { margin: 0; }
.slist .cur .nm { flex: 1; height: 20px; margin: 0; padding-left: 2px; line-height: 20px; background: #3191f8; border: 1px dotted #2465aa; border-width: 1px 0; }
.pair button { display: block; width: 11px; height: 10px; border: 1px solid #666; background: #eee; color: #222; font: bold 8px/6px "Noto Sans", sans-serif; }
.pair .del { color: #b22; line-height: 7px; }
.slist .pointer { position: absolute; left: 139px; top: 2px; width: 24px; height: 26px; margin: 0; z-index: 1; }
.strip { display: flex; flex-direction: column; align-items: center; width: 11px; color: #222; font-size: 9px; line-height: 12px; }
.strip svg { width: 8px; height: 10px; }
.strip span { flex: 1; width: 4px; margin: 2px 0; border: 1px solid #ccc; border-width: 0 1px; background: #fff; }
.gfoot { display: flex; justify-content: flex-end; height: 24px; padding: 6px 2px 3px; }
.gfoot button { width: 24px; border: 1px solid #999; border-radius: 2px; text-align: right; padding-right: 2px; }

.cyl { left: 39px; top: 256px; width: 306px; height: 159px; padding: 0 3px 4px; border-color: #1e2c3c; background: linear-gradient(90deg, #dfeaf3, #bcd6e9 60%, #d8e7f2); }
.cyl .wtitle { padding: 0 1px; }
.cyl .wx { width: 11px; height: 10px; background: #cf5b49; border-color: #8c352a; }
.cyl .client { border: 1px solid #8a9aa9; padding: 4px 2px 2px; }
.cols { display: flex; gap: 6px; flex: 1; }
.cols fieldset { border: 1px solid #e3e3e3; padding: 3px 4px 3px; }
.cols legend { padding: 0; }
.dims { width: 153px; }
.tbox { height: 95px; border: 1px solid #999; background: #fff; }
table { width: 100%; border-collapse: collapse; table-layout: fixed; }
th, td { padding: 0 0 0 1px; text-align: left; font-weight: normal; white-space: nowrap; line-height: 11px; }
th { line-height: 15px; border-bottom: 1px solid #eee; }
th:first-child, td:first-child { width: 46px; padding-left: 19px; }
th:nth-child(2) { width: 54px; }
.cols .prev { flex: 1; padding: 9px 0 0 17px; }
.prev legend { margin-left: -14px; }
.prev svg { width: 100px; height: 72px; }
.dim { font: 9px "Liberation Sans", sans-serif; fill: #222; }
.actions { display: flex; align-items: center; gap: 5px; height: 22px; padding: 0 1px 0 2px; }
.actions button { width: 48px; height: 14px; border: 1px solid #888; border-radius: 2px; background: linear-gradient(#f6f6f6, #d9d9d9); }
.actions .q { display: flex; align-items: center; justify-content: center; width: 16px; margin: 0; }
.actions .q span { width: 9px; height: 10px; border: 1px solid #444; line-height: 8px; background: #ffffd8; }
.actions .ok { border-color: #2e96b8; box-shadow: inset 0 0 0 1px #9fdcef; }

.status { display: flex; justify-content: flex-end; gap: 22px; height: 17px; padding: 0 13px; line-height: 19px; background: linear-gradient(#fff, #c2c2c2); color: #333; }
```
